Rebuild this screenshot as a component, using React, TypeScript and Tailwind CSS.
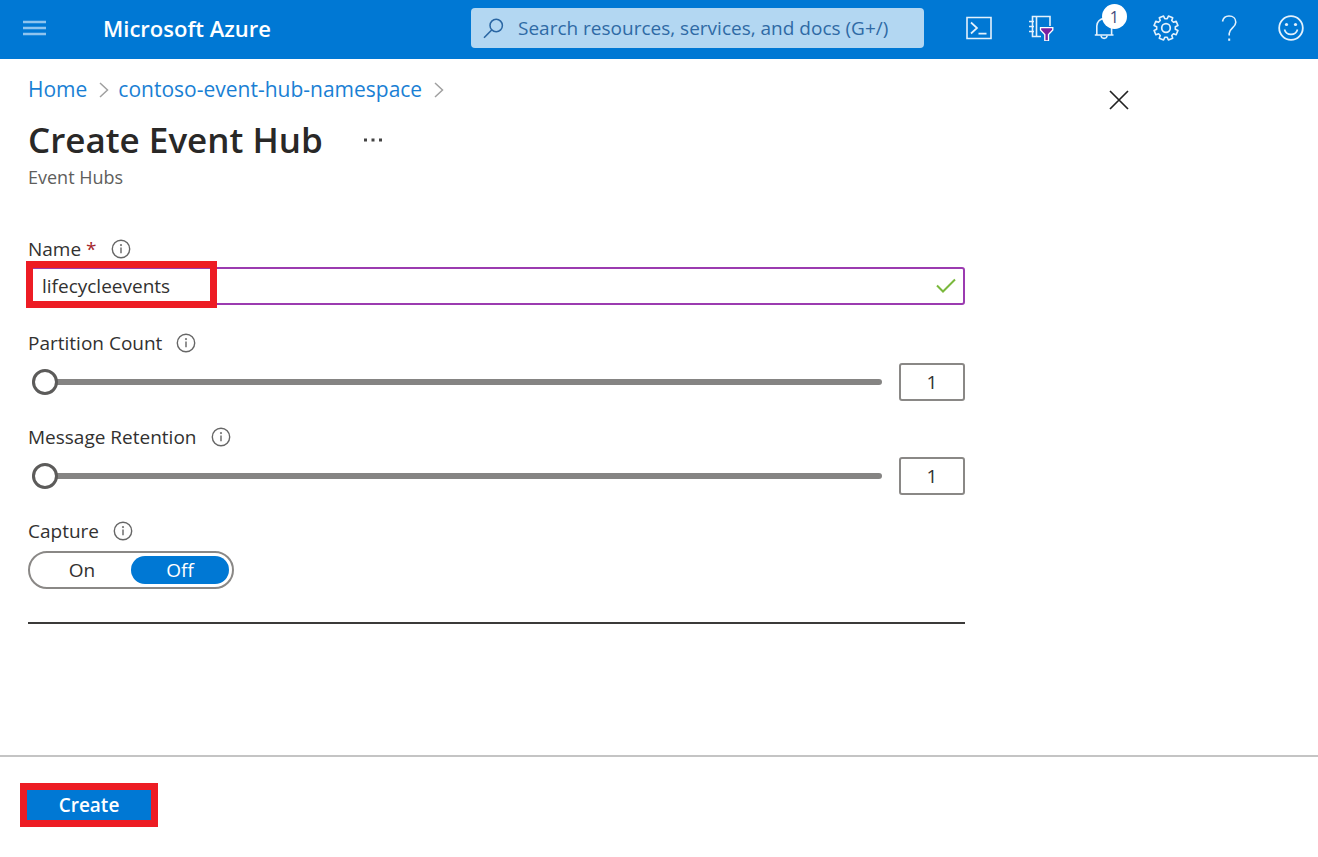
import { useState } from "react";
import type { ReactNode } from "react";

function InfoIcon() {
  return (
    <svg width="20" height="20" viewBox="0 0 20 20" fill="none" aria-hidden="true">
      <circle cx="10" cy="10" r="8.7" stroke="#666" strokeWidth="1.4" />
      <path d="M10 8.6v5.6" stroke="#777" strokeWidth="1.6" />
      <circle cx="10" cy="6.1" r="1.1" fill="#777" />
    </svg>
  );
}

function Chevron() {
  return (
    <svg width="10" height="18" viewBox="0 0 10 18" fill="none" aria-hidden="true">
      <path d="M1 2l7.5 7L1 16" stroke="#a0a0a0" strokeWidth="1.5" />
    </svg>
  );
}

// Outline of an eight-toothed gear centred in a 26-unit box, with a notch at the top.
function gearPath() {
  const point = (radius: number, degrees: number) => {
    const angle = (degrees * Math.PI) / 180;
    return `${(13 + radius * Math.sin(angle)).toFixed(2)} ${(13 - radius * Math.cos(angle)).toFixed(2)}`;
  };
  const teeth = Array.from({ length: 8 }, (_, i) => {
    const mid = 22.5 + i * 45;
    return `${point(9.4, mid - 15)}L${point(12.2, mid - 11)}L${point(12.2, mid + 11)}L${point(9.4, mid + 15)}`;
  });
  return `M${teeth.join("L")}Z`;
}

function IconButton({ label, children }: { label: string; children: ReactNode }) {
  return (
    <button type="button" aria-label={label} className="relative size-[26px] shrink-0 text-[#e3f1fc]">
      {children}
    </button>
  );
}

function TopBar() {
  return (
    <header className="flex h-[59px] items-center bg-[#0078d4] pr-[14px] pb-[3px]">
      <div className="flex w-[471px] shrink-0 items-center pl-[23px]">
        <button type="button" aria-label="Show portal menu" className="text-[#8fc4ee]">
          <svg width="23" height="18" viewBox="0 0 23 18" aria-hidden="true">
            <path d="M0 3h23M0 9h23M0 15h23" stroke="currentColor" strokeWidth="2.4" />
          </svg>
        </button>
        <a href="#" className="ml-[57px] text-[22px] font-semibold text-white">
          Microsoft Azure
        </a>
      </div>
      <label className="flex h-10 min-w-0 max-w-[453px] grow-[100] items-center gap-[14px] rounded-sm bg-[#b3d7f2] pl-3 text-[#2a66a3]">
        <svg width="21" height="21" viewBox="0 0 21 21" fill="none" className="shrink-0" aria-hidden="true">
          <circle cx="13.200" cy="7.500" r="6.200" stroke="currentColor" strokeWidth="1.5" />
          <path d="M8.700 12L1 19.800" stroke="currentColor" strokeWidth="1.6" />
        </svg>
        <input
          type="search"
          aria-label="Search resources, services, and docs"
          placeholder="Search resources, services, and docs (G+/)"
          className="min-w-0 flex-1 bg-transparent text-[19px] outline-none placeholder:text-[#2f6aa5]"
        />
      </label>
      <nav aria-label="Portal tools" className="ml-[42px] flex flex-1 items-center justify-between">
        <IconButton label="Cloud Shell">
          <svg width="26" height="26" viewBox="0 0 26 26" fill="none" stroke="currentColor" aria-hidden="true">
            <path d="M1 2.500h24v21H1z" strokeWidth="1.600" />
            <path d="M5 7.500l6 5.500-6 5.500M12.500 18.700h8" strokeWidth="1.700" />
          </svg>
        </IconButton>
        <IconButton label="Directories and subscriptions">
          <svg width="26" height="26" viewBox="0 0 26 26" fill="none" stroke="currentColor" aria-hidden="true">
            <path d="M22 11V1.500H4.500v20H13M8.500 1.500v20" strokeWidth="1.600" />
            <path d="M1 6.500h5M1 11.500h5M1 16.500h5" strokeWidth="1.600" />
            <path d="M12.500 12.700h12.300v2.300l-4.300 4.600v6.200h-3.700v-6.200l-4.300-4.600z" fill="#7a1fa0" stroke="#fff" strokeWidth="1.300" />
          </svg>
        </IconButton>
        <IconButton label="Notifications, 1 new">
          <svg width="26" height="26" viewBox="0 0 26 26" fill="none" stroke="currentColor" aria-hidden="true">
            <path d="M5.800 19.800V11a7.400 7.400 0 0 1 14.800 0v8.800M3.800 20h18.700" strokeWidth="1.600" />
            <path d="M10 20.500c.6 3.800 5.600 3.800 6.200 0" strokeWidth="1.600" />
          </svg>
          <span className="absolute -top-[11px] left-[11px] flex size-[25px] items-center justify-center rounded-full bg-white text-[16px] text-[#444b7c]">
            1
          </span>
        </IconButton>
        <IconButton label="Settings">
          <svg width="26" height="26" viewBox="0 0 26 26" fill="none" stroke="currentColor" aria-hidden="true">
            <circle cx="13" cy="13" r="4.300" strokeWidth="1.700" />
            <path d={gearPath()} strokeWidth="1.600" strokeLinejoin="round" />
          </svg>
        </IconButton>
        <IconButton label="Help">
          <svg width="26" height="26" viewBox="0 0 26 26" fill="none" stroke="currentColor" aria-hidden="true">
            <path d="M6.500 6.500C7.200 2.800 9.500 1 13 1c4.200 0 6.800 2.500 6.800 6.200 0 5.300-6.600 6-6.600 11.300v2" strokeWidth="1.600" />
            <path d="M13.200 23.500v2.300" strokeWidth="2" />
          </svg>
        </IconButton>
        <IconButton label="Feedback">
          <svg width="26" height="26" viewBox="0 0 26 26" fill="none" stroke="currentColor" aria-hidden="true">
            <circle cx="13" cy="13" r="11.800" strokeWidth="1.800" />
            <path d="M6.500 14.500c1.600 6.500 11.400 6.500 13 0" strokeWidth="1.600" />
            <circle cx="8.500" cy="9.500" r="1.600" fill="currentColor" stroke="none" />
            <circle cx="17.500" cy="9.500" r="1.600" fill="currentColor" stroke="none" />
          </svg>
        </IconButton>
      </nav>
    </header>
  );
}

function SliderField({ id, label, max }: { id: string; label: string; max: number }) {
  const [value, setValue] = useState(1);
  return (
    <div className="flex flex-col gap-[6px]">
      <div className="flex h-7 items-center gap-[14px]">
        <label htmlFor={id}>{label}</label>
        <InfoIcon />
      </div>
      <div className="flex h-[38px] items-center gap-[17px] pl-1">
        <input
          id={id}
          type="range"
          min={1}
          max={max}
          value={value}
          onChange={(e) => setValue(Number(e.target.value))}
          className="h-[26px] min-w-0 flex-1 appearance-none bg-transparent [&::-webkit-slider-runnable-track]:h-[6px] [&::-webkit-slider-runnable-track]:rounded-full [&::-webkit-slider-runnable-track]:bg-[#858483] [&::-webkit-slider-thumb]:-mt-[10px] [&::-webkit-slider-thumb]:size-[26px] [&::-webkit-slider-thumb]:appearance-none [&::-webkit-slider-thumb]:rounded-full [&::-webkit-slider-thumb]:border-3 [&::-webkit-slider-thumb]:border-[#5c5b5a] [&::-webkit-slider-thumb]:bg-white"
        />
        <input
          type="text"
          inputMode="numeric"
          aria-label={`${label} value`}
          value={value}
          onChange={(e) => setValue(Number(e.target.value) || 1)}
          className="h-[38px] w-[66px] rounded-[3px] border-2 border-[#8a8886] text-center outline-none"
        />
      </div>
    </div>
  );
}

function CaptureToggle() {
  const [capture, setCapture] = useState("Off");
  return (
    <fieldset>
      <legend className="flex h-7 items-center gap-[14px]">
        Capture
        <InfoIcon />
      </legend>
      <div className="relative mt-[6px] flex h-[38px] w-[206px] rounded-full border-2 border-[#8a8886] p-[3px]">
        {["On", "Off"].map((option) => (
          <label
            key={option}
            className="flex flex-1 cursor-pointer items-center justify-center rounded-full has-checked:bg-[#0078d4] has-checked:text-white"
          >
            <input
              type="radio"
              name="capture"
              value={option}
              checked={capture === option}
              onChange={() => setCapture(option)}
              className="sr-only"
            />
            {option}
          </label>
        ))}
      </div>
    </fieldset>
  );
}

export default function App() {
  const [name, setName] = useState("lifecycleevents");
  return (
    <div className="flex min-h-screen flex-col bg-white font-['Open_Sans','Noto_Sans',sans-serif] text-[19px] text-[#323130]">
      <TopBar />
      <main className="flex-1 px-7">
        <div className="flex max-w-[1102px] items-start justify-between pt-[17px]">
          <div>
            <nav aria-label="Breadcrumb" className="flex h-7 items-center text-[21px] text-[#1a7fd4]">
              <a href="#">Home</a>
              <span className="mr-[9px] ml-3">
                <Chevron />
              </span>
              <a href="#">contoso-event-hub-namespace</a>
              <span className="ml-3">
                <Chevron />
              </span>
            </nav>
            <div className="mt-3 flex h-12 items-center gap-10">
              <h1 className="text-[35px] font-semibold text-[#292827]">Create Event Hub</h1>
              <button type="button" aria-label="More actions">
                <svg width="20" height="4" viewBox="0 0 20 4" fill="#444" aria-hidden="true">
                  <path d="M1 .5h3v3H1zM8.500.5h3v3h-3zM16 .5h3v3h-3z" />
                </svg>
              </button>
            </div>
            <p className="text-[18px] leading-[26px] text-[#605e5c]">Event Hubs</p>
          </div>
          <button type="button" aria-label="Close" className="mt-[13px]">
            <svg width="22" height="22" viewBox="0 0 22 22" stroke="#222" strokeWidth="1.700" aria-hidden="true">
              <path d="M2 2l18 18M20 2L2 20" />
            </svg>
          </button>
        </div>

        <form id="create-hub" className="mt-[45px] flex max-w-[937px] flex-col gap-[22px]" onSubmit={(e) => e.preventDefault()}>
          <div className="flex flex-col gap-1 pb-[2px]">
            <div className="flex h-7 items-center gap-[14px]">
              <label htmlFor="hub-name">
                Name <span className="text-[#a4262c]">*</span>
              </label>
              <InfoIcon />
            </div>
            <div className="relative flex h-[38px] items-center rounded-[3px] border-2 border-[#9b3bb0] pr-[7px] pl-3">
              <input
                id="hub-name"
                value={name}
                onChange={(e) => setName(e.target.value)}
                className="min-w-0 flex-1 bg-transparent outline-none"
              />
              <svg width="20" height="16" viewBox="0 0 20 16" fill="none" aria-hidden="true">
                <path d="M1 7.500l6 6L19 1.500" stroke="#7ab83c" strokeWidth="2" />
              </svg>
              <span className="pointer-events-none absolute -top-2 -left-1 h-[47px] w-[191px] border-7 border-[#ed1c24]" />
            </div>
          </div>
          <SliderField id="partition-count" label="Partition Count" max={32} />
          <SliderField id="message-retention" label="Message Retention" max={7} />
          <CaptureToggle />
          <hr className="mt-[11px] border-t-2 border-[#3b3a39]" />
        </form>
      </main>
      <footer className="flex h-[102px] items-center border-t-2 border-[#c4c4c4] px-5 pb-1">
        <button
          type="submit"
          form="create-hub"
          className="h-[44px] w-[138px] border-7 border-[#ed1c24] bg-[#0078d4] text-[19px] leading-none font-semibold text-white"
        >
          Create
        </button>
      </footer>
    </div>
  );
}
